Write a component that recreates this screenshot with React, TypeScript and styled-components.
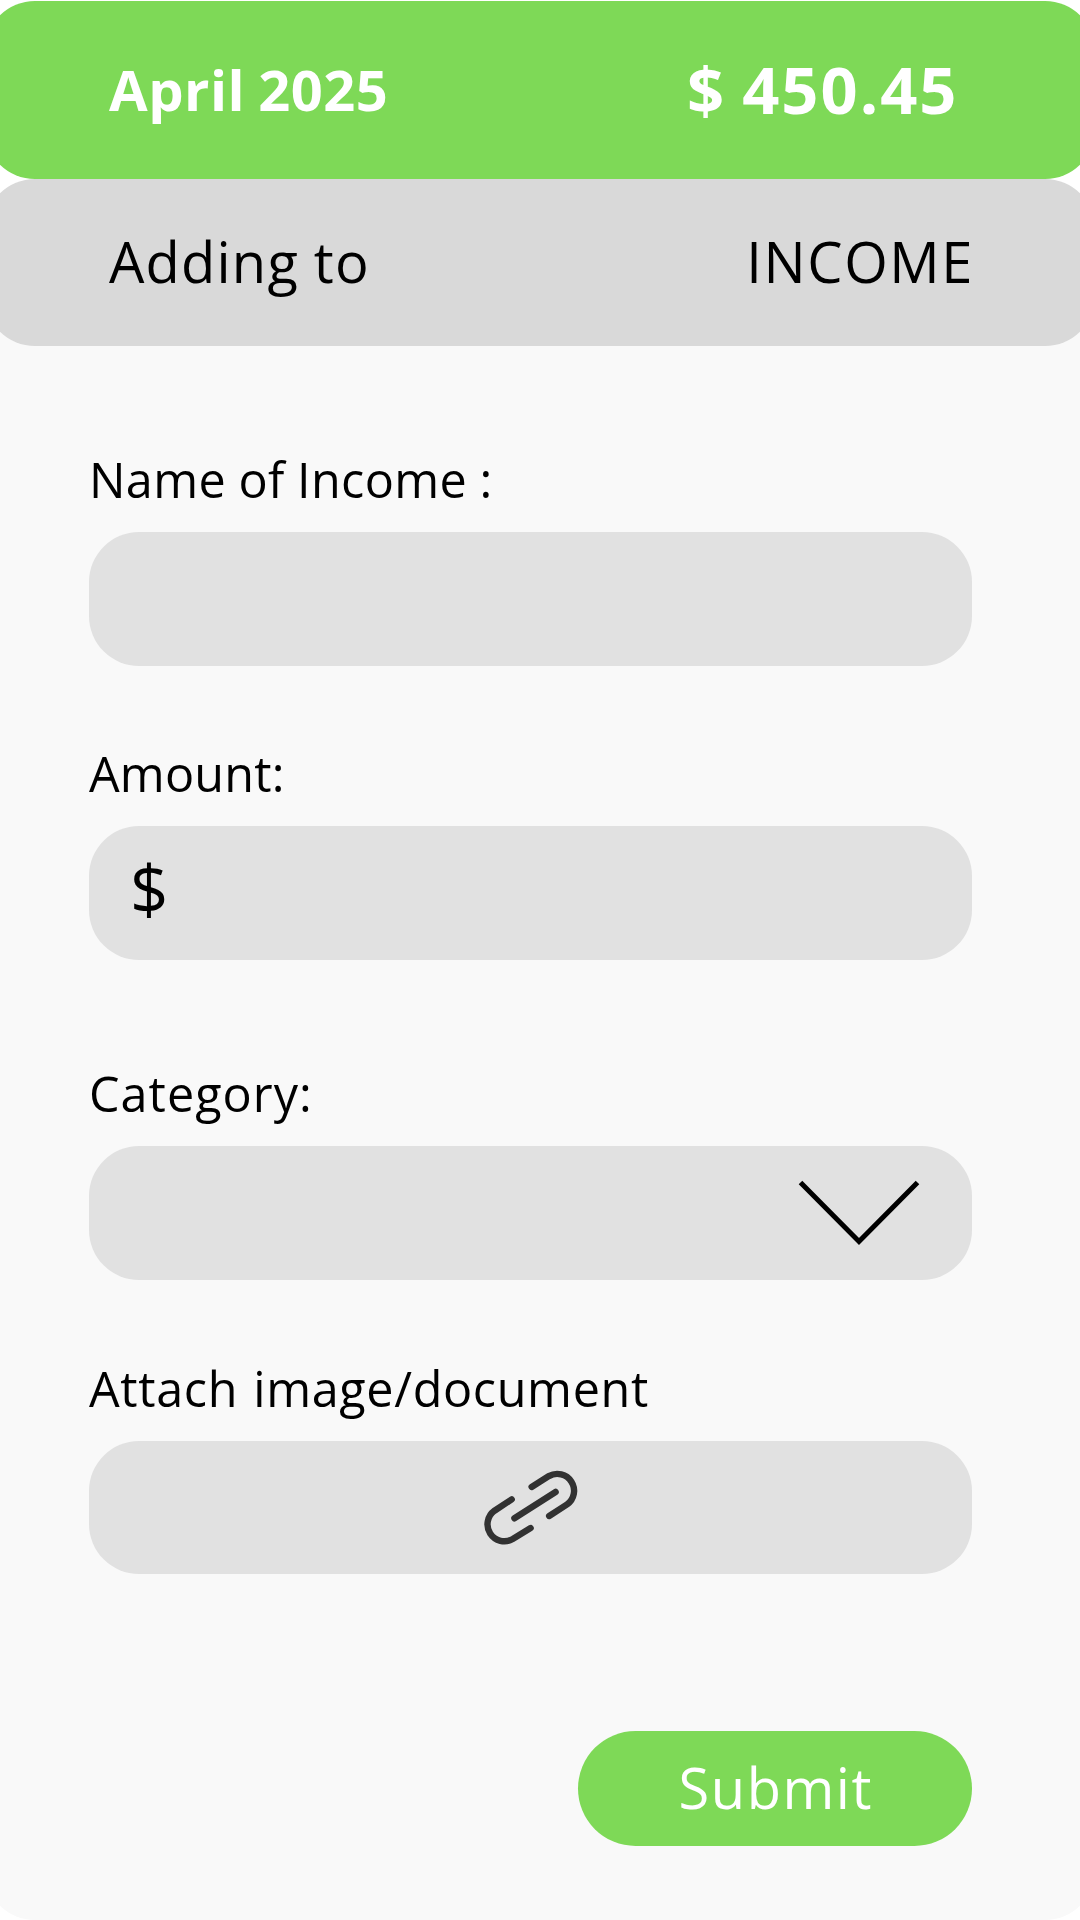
import React from 'react';
import styled, { createGlobalStyle } from 'styled-components';

const GlobalStyle = createGlobalStyle`
  * { box-sizing: border-box; }
  body {
    margin: 0;
    background: #ffffff;
    font-family: "Open Sans", "Noto Sans", sans-serif;
    color: #000000;
  }
`;

const Screen = styled.main`
  width: 1080px;
  height: 1920px;
  overflow: hidden;
  padding-top: 1px;
  display: flex;
  flex-direction: column;
  align-items: center;
`;

const Banner = styled.header<{ $tone: string; $height: number }>`
  flex: none;
  width: 1110px;
  height: ${(p) => p.$height}px;
  border-radius: 50px;
  background: ${(p) => p.$tone};
  padding: 0 124px 2px;
  display: flex;
  align-items: center;
  justify-content: space-between;
  position: relative;
  z-index: 1;
`;

const BannerText = styled.span<{
  $size?: number;
  $bold?: boolean;
  $spacing?: number;
  $word?: number;
  $end?: number;
}>`
  font-size: ${(p) => p.$size ?? 56}px;
  font-weight: ${(p) => (p.$bold ? 700 : 400)};
  letter-spacing: ${(p) => p.$spacing ?? 0}px;
  word-spacing: ${(p) => p.$word ?? 0}px;
  color: ${(p) => (p.$bold ? '#ffffff' : '#000000')};
  margin-right: ${(p) => p.$end ?? 0}px;
  line-height: 80px;
  white-space: nowrap;
`;

const Sheet = styled.form`
  flex: 1;
  width: 1110px;
  margin-top: -80px;
  padding: 183.9px 123px 0 103.5px;
  border-radius: 50px;
  background: #f9f9f9;
  display: flex;
  flex-direction: column;
`;

const Field = styled.div<{ $after: number }>`
  display: flex;
  flex-direction: column;
  gap: 23px;
  margin-bottom: ${(p) => p.$after}px;
`;

const Label = styled.label<{ $spacing: number; $word?: number; $indent?: number }>`
  font-size: 48.5px;
  line-height: 60px;
  letter-spacing: ${(p) => p.$spacing}px;
  word-spacing: ${(p) => p.$word ?? 0}px;
  padding-left: ${(p) => p.$indent ?? 0}px;
  white-space: nowrap;
`;

const Control = styled.div<{ $justify?: string }>`
  height: 133.4px;
  border-radius: 50px;
  background: #e1e1e1;
  padding: 0 52.5px 0 41.5px;
  display: flex;
  align-items: center;
  justify-content: ${(p) => p.$justify ?? 'flex-start'};
`;

const Currency = styled.span`
  font-size: 67px;
  line-height: 80px;
  padding-bottom: 9px;
`;

const LinkIcon = styled.svg`
  width: 101.6px;
  height: 81px;
  margin-left: 12px;
`;

const Chevron = styled.svg`
  width: 122px;
  height: 66px;
  margin-bottom: 1px;
`;

const Submit = styled.button`
  align-self: flex-end;
  width: 394.5px;
  height: 115.5px;
  border: 0;
  border-radius: 58px;
  padding: 0 0 2px 2px;
  background: #7ed957;
  color: #ffffff;
  font: 400 56px/80px "Open Sans", "Noto Sans", sans-serif;
  letter-spacing: 1.5px;
`;

export default function App() {
  return (
    <>
      <GlobalStyle />
      <Screen>
        <Banner $tone="#7ed957" $height={178}>
          <BannerText $bold $spacing={0.5} $word={-2}>April 2025</BannerText>
          <BannerText $bold $size={65} $spacing={2} $word={-3} $end={12.5}>$ 450.45</BannerText>
        </Banner>
        <Banner $tone="#d9d9d9" $height={166.5}>
          <BannerText $spacing={1.2} $word={-1}>Adding to</BannerText>
          <BannerText $spacing={1.6} $end={-3}>INCOME</BannerText>
        </Banner>
        <Sheet>
          <Field $after={77.4}>
            <Label $spacing={0.35} $word={-0.5} $indent={0.5}>Name of Income :</Label>
            <Control />
          </Field>
          <Field $after={103.8}>
            <Label $spacing={0.2} $indent={0.5}>Amount:</Label>
            <Control>
              <Currency>$</Currency>
            </Control>
          </Field>
          <Field $after={78}>
            <Label $spacing={1.05} $indent={0.5}>Category:</Label>
            <Control $justify="flex-end">
              <Chevron viewBox="797.5 1180 122 66">
                <path d="M800 1182.5 858.5 1241.5 917 1182.5" fill="none" stroke="#000" strokeWidth="5" />
              </Chevron>
            </Control>
          </Field>
          <Field $after={156.4}>
            <Label $spacing={0.65} $word={2} $indent={0.5}>Attach image/document</Label>
            <Control $justify="center">
              <LinkIcon viewBox="31 54 301 240">
                <g fill="none" stroke="#323232" strokeWidth="19" strokeLinecap="round">
                  <path d="M184 113 235 81A50 50 0 0 1 289 165L236 199" />
                  <path d="M133 206 255 128" />
                  <path d="M125 150 74 183.500A50 50 0 0 0 128 267.500L181 235" />
                </g>
              </LinkIcon>
            </Control>
          </Field>
          <Submit type="button">Submit</Submit>
        </Sheet>
      </Screen>
    </>
  );
}
